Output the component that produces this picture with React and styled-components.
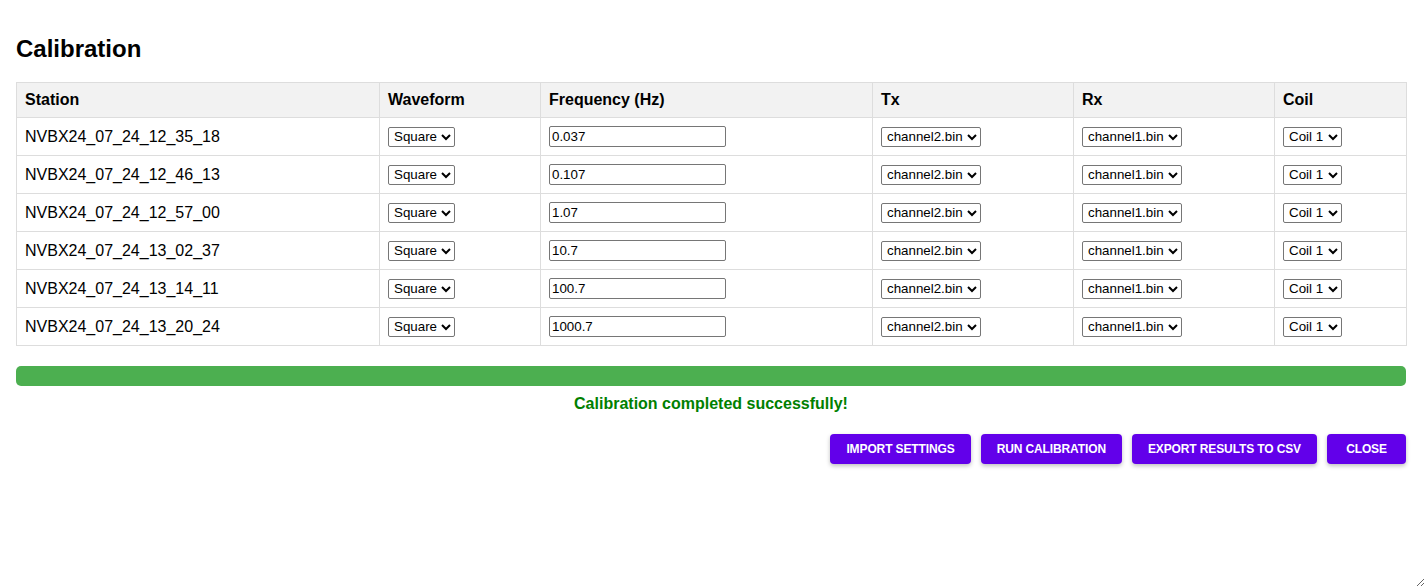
import styled, { createGlobalStyle } from "styled-components";

const GlobalStyle = createGlobalStyle`
  html, body {
    margin: 0;
    padding: 0;
    background: #fff;
  }
  body {
    font-family: "Liberation Sans", Arial, sans-serif;
    color: #000;
  }
`;

const Panel = styled.div`
  box-sizing: border-box;
  width: 1425px;
  height: 587px;
  padding: 35px 19px 0 16px;
  background: #fff;
  resize: both;
  overflow: auto;
`;

const Title = styled.h2`
  margin: 0 0 20px;
  font-size: 24px;
  line-height: 27px;
  font-weight: 700;
`;

const Table = styled.table`
  width: 1390px;
  border-collapse: collapse;
  table-layout: fixed;
  font-size: 16px;
`;

const HeadCell = styled.th`
  background: #f2f2f2;
  border: 1px solid #ddd;
  padding: 8px;
  text-align: left;
  font-weight: 700;
  line-height: 18px;
`;

const Cell = styled.td`
  border: 1px solid #ddd;
  padding: 8px;
  line-height: 18px;
  height: 21px;
  vertical-align: middle;
`;

const Select = styled.select`
  font-family: "Liberation Sans", Arial, sans-serif;
  font-size: 13.33px;
  height: 20px;
  padding: 0 1px;
  border: 1px solid #767676;
  border-radius: 2px;
  background: #fff;
  color: #000;
`;

const Input = styled.input`
  box-sizing: border-box;
  width: 177px;
  height: 21px;
  font-family: "Liberation Sans", Arial, sans-serif;
  font-size: 13.33px;
  padding: 1px 2px;
  border: 1px solid #767676;
  border-radius: 2px;
`;

const Progress = styled.div`
  margin-top: 20px;
  height: 20px;
  width: 1390px;
  border-radius: 5px;
  background: #4caf50;
`;

const Status = styled.div`
  margin-top: 9px;
  width: 1390px;
  text-align: center;
  color: #008000;
  font-weight: 700;
  font-size: 16px;
  line-height: 18px;
`;

const Actions = styled.div`
  margin-top: 21px;
  width: 1390px;
  display: flex;
  justify-content: flex-end;
  gap: 10px;
`;

const Button = styled.button`
  min-width: 79px;
  height: 30px;
  padding: 0 16px;
  border: none;
  border-radius: 4px;
  background: #6200ea;
  color: #fff;
  font-family: "Liberation Sans", Arial, sans-serif;
  font-size: 12px;
  font-weight: 700;
  letter-spacing: -0.12px;
  text-transform: uppercase;
  box-shadow: 0 2px 4px rgba(0, 0, 0, 0.25);
  cursor: pointer;
`;

const rows = [
  ["NVBX24_07_24_12_35_18", "0.037"],
  ["NVBX24_07_24_12_46_13", "0.107"],
  ["NVBX24_07_24_12_57_00", "1.07"],
  ["NVBX24_07_24_13_02_37", "10.7"],
  ["NVBX24_07_24_13_14_11", "100.7"],
  ["NVBX24_07_24_13_20_24", "1000.7"],
];

const widths = [363, 161, 332, 201, 201, 132];

const App = () => {
  return (
    <Panel>
      <GlobalStyle />
      <Title>Calibration</Title>
      <Table>
        <colgroup>
          {widths.map((w, i) => (
            <col key={i} style={{ width: w }} />
          ))}
        </colgroup>
        <thead>
          <tr>
            <HeadCell>Station</HeadCell>
            <HeadCell>Waveform</HeadCell>
            <HeadCell>Frequency (Hz)</HeadCell>
            <HeadCell>Tx</HeadCell>
            <HeadCell>Rx</HeadCell>
            <HeadCell>Coil</HeadCell>
          </tr>
        </thead>
        <tbody>
          {rows.map(([station, freq]) => (
            <tr key={station}>
              <Cell>{station}</Cell>
              <Cell>
                <Select defaultValue="square">
                  <option value="square">Square</option>
                  <option value="sine">Sine</option>
                </Select>
              </Cell>
              <Cell>
                <Input defaultValue={freq} />
              </Cell>
              <Cell>
                <Select defaultValue="channel2.bin">
                  <option>channel1.bin</option>
                  <option>channel2.bin</option>
                </Select>
              </Cell>
              <Cell>
                <Select defaultValue="channel1.bin">
                  <option>channel1.bin</option>
                  <option>channel2.bin</option>
                </Select>
              </Cell>
              <Cell>
                <Select defaultValue="Coil 1">
                  <option>Coil 1</option>
                  <option>Coil 2</option>
                </Select>
              </Cell>
            </tr>
          ))}
        </tbody>
      </Table>
      <Progress />
      <Status>Calibration completed successfully!</Status>
      <Actions>
        <Button>Import Settings</Button>
        <Button>Run Calibration</Button>
        <Button>Export Results to CSV</Button>
        <Button>Close</Button>
      </Actions>
    </Panel>
  );
};

export default App;
